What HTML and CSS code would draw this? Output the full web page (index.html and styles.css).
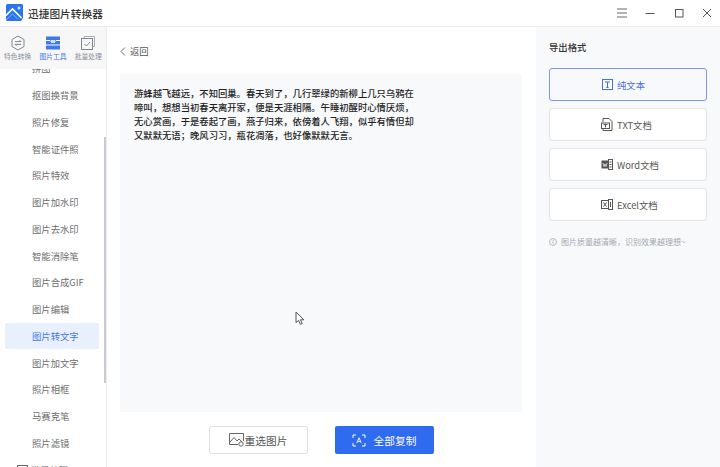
FILE: index.html
```html
<!DOCTYPE html>
<html lang="zh">
<head>
<meta charset="utf-8">
<title>迅捷图片转换器</title>
<link rel="stylesheet" href="styles.css">
</head>
<body>
<div class="app">
  <header class="titlebar">
    <div class="brand">
      <svg class="logo" width="17" height="17" viewBox="0 0 17 17"><path d="M1.5 0H15.5A1.5 1.5 0 0 1 17 1.5V14L15 17H1.5A1.5 1.5 0 0 1 0 15.5V1.5A1.5 1.5 0 0 1 1.5 0Z" fill="#2a74ee"/><path d="M0 11.5L6.5 5L15.5 14" fill="none" stroke="#fff" stroke-width="1.7"/><path d="M0 16L6.5 10L12 15.5" fill="none" stroke="#7fb0ff" stroke-width="1"/><circle cx="13" cy="4" r="1.5" fill="#cfe2ff"/></svg>
      <span class="brand-name">迅捷图片转换器</span>
    </div>
    <div class="winctl">
      <svg width="10" height="10" viewBox="0 0 10 10"><path d="M0 1H10M0 5H10M0 9H10" stroke="#666" fill="none"/></svg>
      <svg width="10" height="10" viewBox="0 0 10 10"><path d="M0.5 5.5H9.5" stroke="#555" fill="none"/></svg>
      <svg width="10" height="10" viewBox="0 0 10 10"><rect x="1.5" y="1.5" width="7.5" height="7.5" stroke="#555" fill="none"/></svg>
      <svg width="10" height="10" viewBox="0 0 10 10"><path d="M1 1L9 9M9 1L1 9" stroke="#555" fill="none"/></svg>
    </div>
  </header>
  <div class="body">
    <aside class="sidebar">
      <nav class="tabs">
        <div class="tab">
          <svg width="16" height="16" viewBox="0 0 16 16"><path d="M8 1L14 4.5V11.5L8 15L2 11.5V4.5Z" fill="none" stroke="#7d8794" stroke-width="1"/><path d="M5 6.6H11L9.6 5.2M11 9.4H5L6.4 10.8" fill="none" stroke="#7d8794" stroke-width="1"/></svg>
          <span>特色转换</span>
        </div>
        <div class="tab tab-on">
          <svg width="16" height="16" viewBox="0 0 16 16"><rect x="1" y="1.5" width="14" height="13" fill="#3f78ec"/><path d="M1 5.5H5L6.5 7H9.5L11 5.5H15M1 10H15" stroke="#fff" fill="none"/><rect x="6" y="5" width="4" height="3" fill="#cfe0ff"/></svg>
          <span>图片工具</span>
        </div>
        <div class="tab">
          <svg width="16" height="16" viewBox="0 0 16 16"><path d="M4 3.5V1.5H14.5V11.5H12.5" fill="none" stroke="#a8aeb6"/><rect x="1.5" y="3.5" width="11" height="11" fill="none" stroke="#7d8794"/><path d="M4.5 9L6.5 11L10 7" fill="none" stroke="#7d8794"/></svg>
          <span>批量处理</span>
        </div>
      </nav>
      <div class="list-wrap">
        <ul class="list">
          <li class="item">拼图</li>
          <li class="item">抠图换背景</li>
          <li class="item">照片修复</li>
          <li class="item">智能证件照</li>
          <li class="item">照片特效</li>
          <li class="item">图片加水印</li>
          <li class="item">图片去水印</li>
          <li class="item">智能消除笔</li>
          <li class="item">图片合成GIF</li>
          <li class="item">图片编辑</li>
          <li class="item item-on">图片转文字</li>
          <li class="item">图片加文字</li>
          <li class="item">照片相框</li>
          <li class="item">马赛克笔</li>
          <li class="item">照片滤镜</li>
          <li class="item item-group">
            <svg width="11" height="10" viewBox="0 0 11 10"><rect x="0.5" y="0.5" width="10" height="9" fill="none" stroke="#666"/><path d="M0.5 3H10.5" stroke="#666"/></svg>
            <span>批量处理</span>
          </li>
        </ul>
        <div class="scrollbar"></div>
      </div>
    </aside>
    <main class="main">
      <div class="back">
        <svg width="6" height="9" viewBox="0 0 6 9"><path d="M5 0.5L1 4.5L5 8.5" fill="none" stroke="#666"/></svg>
        <span>返回</span>
      </div>
      <article class="result">
        <p>游蜂越飞越远，不知回巢。春天到了，几行翠绿的新柳上几只乌鸦在啼叫，想想当初春天离开家，便是天涯相隔。午睡初醒时心情厌烦，无心赏画，于是卷起了画，燕子归来，依傍着人飞翔，似乎有情但却又默默无语；晚风习习，瓶花凋落，也好像默默无言。</p>
        <svg class="cursor" width="10" height="15" viewBox="0 0 10 15"><path d="M1 1V11.5L3.6 9.4L5.4 13.4L7.2 12.5L5.4 8.8H8.8Z" fill="#fff" stroke="#555" stroke-width="1"/></svg>
      </article>
      <div class="actions">
        <button class="btn btn-ghost">
          <svg width="16" height="14" viewBox="0 0 16 14"><path d="M9 11.5H0.5V0.5H14.5V8" fill="none" stroke="#666"/><path d="M1 9L5 4.5L8 8L10 6L13.5 9.5" fill="none" stroke="#666"/><circle cx="12" cy="11" r="2.2" fill="#fff" stroke="#666"/></svg>
          <span>重选图片</span>
        </button>
        <button class="btn btn-primary">
          <svg width="14" height="13" viewBox="0 0 14 13"><path d="M1 4V1H4M10 1H13V4M13 9V12H10M4 12H1V9" fill="none" stroke="#fff"/><path d="M4.8 9L7 3.8L9.2 9M5.6 7.4H8.4" fill="none" stroke="#fff" stroke-width=".9"/></svg>
          <span>全部复制</span>
        </button>
      </div>
    </main>
    <aside class="panel">
      <h2 class="panel-title">导出格式</h2>
      <div class="formats">
        <div class="fmt fmt-on">
          <svg width="11" height="11" viewBox="0 0 11 11"><rect x="0.5" y="0.5" width="10" height="10" fill="none" stroke="#4a6fd8"/><path d="M3 3H8M5.5 3V8.5M4.4 8.5H6.6" fill="none" stroke="#4a6fd8"/></svg>
          <span>纯文本</span>
        </div>
        <div class="fmt">
          <svg width="12" height="13" viewBox="0 0 12 13"><path d="M2 4V.5H8L11 3.5V12.5H2V11" fill="none" stroke="#555"/><rect x="0.5" y="5" width="8" height="5.5" fill="#fff" stroke="#555"/><path d="M2.5 6.6H6.5M4.5 6.6V9.4" stroke="#555" fill="none"/></svg>
          <span>TXT文档</span>
        </div>
        <div class="fmt">
          <svg width="12" height="11" viewBox="0 0 12 11"><rect x="0.5" y="1.5" width="7" height="8" fill="#555"/><rect x="7.5" y="0.5" width="4" height="10" fill="#fff" stroke="#555"/><path d="M2 4L3 7.5L4 5L5 7.5L6 4" stroke="#fff" fill="none" stroke-width=".7"/><path d="M8.5 3H10.5M8.5 5.5H10.5M8.5 8H10.5" stroke="#555"/></svg>
          <span>Word文档</span>
        </div>
        <div class="fmt">
          <svg width="12" height="11" viewBox="0 0 12 11"><rect x="0.5" y="1.5" width="7" height="8" fill="#fff" stroke="#555"/><rect x="7.5" y="0.5" width="4" height="10" fill="#fff" stroke="#555"/><path d="M2.5 3.5L5.5 7.5M5.5 3.5L2.5 7.5" stroke="#555" fill="none"/><path d="M9.5 3V8" stroke="#555"/></svg>
          <span>Excel文档</span>
        </div>
      </div>
      <p class="tip">
        <svg width="8" height="8" viewBox="0 0 8 8"><circle cx="4" cy="4" r="3.5" fill="none" stroke="#a3a8b0" stroke-width=".8"/><path d="M4 3.4V6M4 2V2.8" stroke="#a3a8b0" stroke-width=".8"/></svg>
        <span>图片质量越清晰，识别效果越理想~</span>
      </p>
    </aside>
  </div>
</div>
</body>
</html>
```
FILE: styles.css
```css
* { box-sizing: border-box; }
html, body { margin: 0; height: 100%; }
body {
  font-family: "Noto Sans CJK SC", "Noto Sans", sans-serif;
  color: #333;
  background: #fff;
  overflow: hidden;
}
.app { width: 720px; height: 467px; display: flex; flex-direction: column; }
.titlebar {
  height: 27px;
  flex: none;
  display: flex;
  align-items: center;
  justify-content: space-between;
  padding: 0 8px 0 6px;
  border-bottom: 1px solid #ececec;
}
.brand { display: flex; align-items: center; gap: 5px; }
.logo { display: block; margin-top: -1px; }
.brand-name { font-size: 10.7px; color: #333; font-weight: 500; }
.winctl { display: flex; align-items: center; gap: 18.3px; margin-top: -1px; }
.winctl svg { display: block; }
.body { flex: 1; display: flex; min-height: 0; }
.sidebar {
  width: 107px;
  flex: none;
  border-right: 1px solid #ececec;
  display: flex;
  flex-direction: column;
}
.tabs {
  height: 42px;
  flex: none;
  display: flex;
  background: #f7f7f7;
  padding: 8px 0 0 0;
  position: relative;
  z-index: 1;
}
.tab {
  width: 35.5px;
  display: flex;
  flex-direction: column;
  align-items: center;
  font-size: 6.8px;
  line-height: 10px;
  color: #8a9099;
  white-space: nowrap;
}
.tab svg { display: block; }
.tab-on { color: #3f78ec; }
.list-wrap { position: relative; flex: 1; overflow: hidden; }
.list { list-style: none; margin: -14px 0 0; padding: 0 0 0 5px; }
.item {
  width: 94px;
  height: 26.75px;
  display: flex;
  align-items: center;
  gap: 3px;
  padding-left: 27px;
  font-size: 9.33px;
  color: #6e6e6e;
  white-space: nowrap;
  border-radius: 2px;
}
.item-on { background: #e9f0fd; color: #3f78ec; }
.item-group { padding-left: 12px; }
.item-group svg { flex: none; }
.scrollbar {
  position: absolute;
  left: 104px;
  top: 68px;
  width: 2px;
  height: 246px;
  background: #c8cbd2;
}
.main { flex: 1; display: flex; flex-direction: column; padding: 0 14px 0 13px; min-width: 0; }
.back {
  height: 47px;
  flex: none;
  display: flex;
  align-items: center;
  gap: 4px;
  font-size: 9.33px;
  color: #555;
  padding: 1px 0 0 0;
}
.back svg { display: block; }
.result {
  height: 338px;
  flex: none;
  background: #f8f9fb;
  padding: 12px 14px;
  position: relative;
}
.result p {
  margin: 0;
  width: 282px;
  font-size: 9.33px;
  line-height: 14px;
  font-weight: 500;
  color: #1f1f1f;
}
.cursor { position: absolute; left: 175px; top: 237px; }
.actions { display: flex; justify-content: center; gap: 27px; padding-top: 14px; }
.btn {
  width: 99px;
  height: 28px;
  display: flex;
  align-items: center;
  justify-content: center;
  font: inherit;
  font-size: 10.7px;
  border-radius: 2px;
  padding: 0;
}
.btn-ghost { background: #fff; border: 1px solid #e0e0e0; color: #555; gap: 0; }
.btn-primary { background: #2f6bee; border: none; color: #fff; gap: 8px; }
.panel {
  width: 184px;
  flex: none;
  background: #f8f9fb;
  padding: 13px 13px 0;
}
.panel-title { margin: 0 0 14px; font-size: 9.33px; line-height: 14px; font-weight: 500; color: #333; }
.formats { display: flex; flex-direction: column; gap: 7px; }
.fmt {
  height: 33px;
  background: #fff;
  border: 1px solid #e3e4ea;
  border-radius: 3px;
  display: flex;
  align-items: center;
  gap: 4px;
  padding-left: 51px;
  font-size: 9.33px;
  color: #555;
}
.fmt svg { display: block; }
.fmt-on { background: #f8f9fd; border-color: #7f96dc; color: #4a6fd8; padding-left: 52px; }
.tip {
  margin: 15px 0 0;
  display: flex;
  align-items: center;
  gap: 4px;
  font-size: 8px;
  line-height: 12px;
  color: #a3a8b0;
  white-space: nowrap;
}
.tip svg { display: block; flex: none; }
```
